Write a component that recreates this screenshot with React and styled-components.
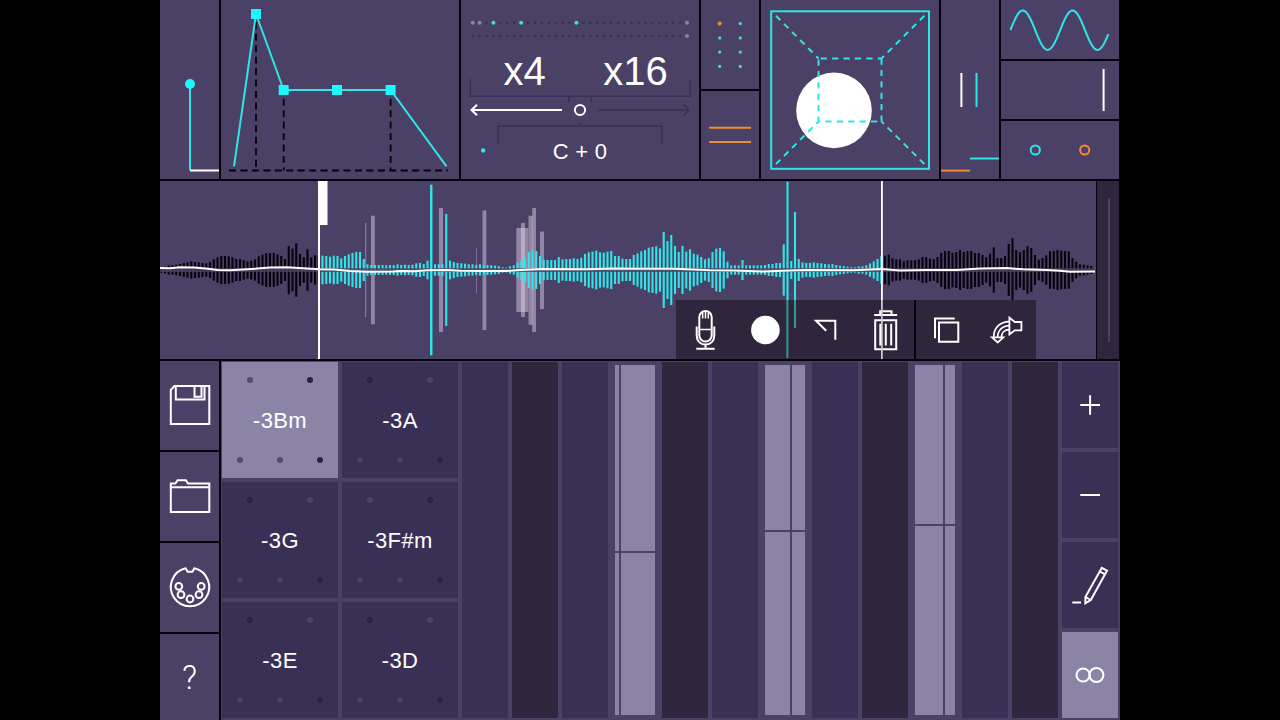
import React from "react";
import styled, { createGlobalStyle } from "styled-components";

const PANEL = "#4b4166";
const KEY = "#3a3055";
const DARK = "#2f263d";
const LIGHT = "#8c84a6";
const CYAN = "#30e4e8";
const BRIGHT = "#1cf8fa";
const ORANGE = "#f08c30";
const LINE = "#3a3057";
const INK = "#04020c";

const GlobalStyle = createGlobalStyle`
  body {
    margin: 0;
    background: #000;
    font-family: "Liberation Sans", Arial, sans-serif;
    color: white;
    overflow: hidden;
  }
`;

const Stage = styled.div`
  width: 960px;
  height: 720px;
  margin: 0 auto;
  display: grid;
  grid-template-rows: 179px 178px 359px;
  gap: 2px;
  background: ${INK};
`;

const TopRow = styled.div`
  display: grid;
  grid-template-columns: 59px 238px 238px 58px 178px 58px 118px;
  gap: 2px;
`;

const Panel = styled.div`
  position: relative;
  background: ${PANEL};
`;

const Stack = styled.div`
  display: grid;
  grid-template-rows: ${(props) => props.rows};
  gap: 2px;
`;

const Drawing = styled.svg`
  display: block;
  fill: none;
  stroke: white;
  stroke-width: 2;
`;

const BackDrawing = styled(Drawing)`
  position: absolute;
  top: 0;
  left: 0;
`;

const Factors = styled.div`
  position: relative;
  display: grid;
  grid-template-columns: 111px 111px;
  padding: 49px 0 0 8px;
  font-size: 40px;
  line-height: 44px;
  text-align: center;
`;

const Note = styled.div`
  position: relative;
  margin-top: 46px;
  font-size: 22px;
  line-height: 26px;
  letter-spacing: 0.3px;
  text-align: center;
`;

const WaveRow = styled.div`
  display: grid;
  grid-template-columns: 936px 22px;
  gap: 1px;
`;

const Wave = styled(Panel)`
  overflow: hidden;
`;

const Strip = styled.div`
  background: ${DARK};
  padding: 17px 0 17px 11px;
`;

const StripLine = styled.div`
  width: 2px;
  height: 144px;
  background: ${PANEL};
`;

const Toolbar = styled.div`
  position: absolute;
  left: 516px;
  bottom: 0;
  display: flex;
  background: ${DARK};
`;

const Tool = styled.div`
  width: 60px;
  height: 59px;
  box-sizing: border-box;
  border-right: ${(props) => (props.$divider ? `2px solid ${INK}` : "none")};
`;

const BottomRow = styled.div`
  display: grid;
  grid-template-columns: 59px 899px;
  gap: 2px;
`;

const Help = styled(Panel)`
  font-family: Roboto, "Open Sans", sans-serif;
  font-weight: 300;
  font-size: 33px;
  line-height: 87px;
  text-align: center;
`;

const Play = styled.div`
  display: flex;
  padding: 1px 0 0 1px;
  background: ${PANEL};
`;

const Pads = styled.div`
  display: grid;
  grid-template-columns: 116px 116px;
  grid-auto-rows: 116px;
  gap: 4px;
`;

const Pad = styled.div`
  position: relative;
  background: ${(props) => (props.$on ? LIGHT : KEY)};
  font-size: 22px;
  line-height: 118px;
  letter-spacing: 0.4px;
  text-align: center;
`;

const Keys = styled.div`
  display: flex;
  gap: 4px;
  margin: 0 4px;
`;

const Key = styled.div`
  width: 46px;
  height: 356px;
  background: ${(props) => (props.$dark ? DARK : KEY)};
`;

const LitKey = styled.div`
  display: grid;
  width: 40px;
  height: 350px;
  margin: 3px;
  grid-template-columns: ${(props) => props.$x}px 1fr;
  grid-template-rows: ${(props) => props.$y}px 1fr;
  column-gap: ${(props) => props.$gapX}px;
  row-gap: ${(props) => props.$gapY}px;
`;

const LitPart = styled.div`
  background: ${LIGHT};
`;

const Actions = styled.div`
  display: grid;
  grid-template-columns: 56px;
  grid-auto-rows: 86px;
  gap: 4px;
`;

const Action = styled.div`
  background: ${(props) => (props.$on ? LIGHT : KEY)};
`;

// half height of every bar, in thirds of a pixel
const bars = [
  8, 10, 14, 14, 16, 18, 21, 23, 26, 24, 23, 21, 20, 24, 32, 38, 42, 42, 41, 38,
  33, 33, 29, 26, 28, 32, 41, 46, 51, 51, 51, 47, 42, 33, 72, 64, 80, 48, 38,
  62, 38, 44, 44, 43, 42, 40, 43, 42, 35, 42, 47, 51, 54, 54, 33, 17, 15, 15,
  15, 15, 14, 15, 15, 17, 15, 16, 15, 16, 20, 21, 18, 28, 256, 17, 17, 17, 168,
  28, 24, 21, 20, 19, 17, 17, 15, 17, 14, 15, 14, 13, 12, 8, 7, 11, 14, 22, 28,
  37, 54, 60, 57, 42, 31, 30, 30, 30, 39, 32, 33, 33, 35, 33, 37, 48, 53, 55,
  58, 53, 52, 55, 57, 42, 42, 34, 33, 33, 45, 50, 56, 60, 67, 69, 71, 65, 114,
  87, 105, 72, 54, 72, 55, 62, 49, 46, 39, 32, 36, 54, 64, 66, 56, 25, 14, 14,
  14, 30, 14, 14, 14, 14, 14, 15, 18, 18, 21, 21, 77, 265, 27, 174, 33, 23, 21,
  21, 23, 21, 20, 18, 17, 18, 15, 13, 12, 10, 8, 8, 11, 11, 14, 20, 26, 33, 41,
  43, 46, 35, 32, 32, 26, 29, 29, 29, 32, 39, 39, 34, 32, 39, 51, 57, 57, 52,
  54, 60, 54, 57, 57, 51, 51, 45, 38, 49, 68, 36, 36, 42, 78, 95, 60, 53, 60,
  71, 66, 45, 31, 36, 44, 56, 57, 60, 58, 57, 56, 36, 25, 17, 16, 14, 12,
];

// x, top, width, height
const grains = [
  [205.2, 42, 1, 94],
  [211, 34.7, 3.8, 108.7],
  [279, 27, 4, 124],
  [316.2, 67, 0.7, 45.5],
  [322.5, 29.5, 3.8, 119.5],
  [356.3, 47, 12, 84],
  [361, 42, 4, 94],
  [368.5, 34.7, 4.3, 109],
  [372.2, 27, 3.8, 124],
  [380, 50.5, 4, 77.5],
];

const level = [
  [0, 87], [10, 87.3], [20, 86.3], [34, 86.4], [46, 87.6], [58, 89], [70, 89.3],
  [87, 88.3], [110, 86.6], [127, 86.3], [147, 87.6], [160, 88.2], [174, 88.4],
  [190, 90], [207, 90.7], [233, 90.6], [240, 89.9], [254, 90.2], [268, 89.3],
  [287, 89], [300, 89.7], [323, 90], [347, 90], [360, 89], [383, 88],
  [427, 88.2], [453, 87.4], [480, 87.7], [513, 87.7], [540, 88.7], [550, 89.3],
  [573, 89.4], [603, 90.6], [623, 89.7], [647, 89], [693, 89.3], [722, 88.1],
  [740, 89.6], [767, 89], [797, 89], [820, 87.4], [847, 87], [863, 88.3],
  [887, 89], [900, 89.8], [910, 90.7], [935, 90.4],
];

const pads = [
  { name: "-3Bm", on: true, top: [0, 1] },
  { name: "-3A", top: [1, 0] },
  { name: "-3G", top: [1, 0] },
  { name: "-3F#m", top: [0, 1] },
  { name: "-3E", top: [1, 0] },
  { name: "-3D", top: [1, 0] },
];

const keys = [
  {},
  { dark: true },
  {},
  { lit: true, x: 4, y: 186, gapX: 1.5, gapY: 1.5 },
  { dark: true },
  {},
  { lit: true, x: 25, y: 165, gapX: 1.5, gapY: 1.5 },
  {},
  { dark: true },
  { lit: true, x: 28, y: 159, gapX: 1.5, gapY: 2 },
  {},
  { dark: true },
];

// Top panels are drawn in the coordinates of the whole 960px stage
function Art({ x, y = 0, w, h, children }) {
  return (
    <Drawing width={w} height={h} viewBox={`${x} ${y} ${w} ${h}`}>
      {children}
    </Drawing>
  );
}

function Envelope() {
  const points = [
    [96, 14],
    [123.7, 90],
    [177, 90],
    [230.6, 90],
  ];
  return (
    <Art x={61} w={238} h={179}>
      <g stroke={INK} strokeWidth="1.8" strokeDasharray="7 4.45">
        <path d="M96 22.3V170.5" />
        <path d="M123.7 98.7V170.5" />
        <path d="M230.6 98.7V170.5" />
        <path d="M69 170.5H288" />
      </g>
      <path
        stroke={CYAN}
        d="M74 166.3L96 14L123.7 90H230.6L286.5 166.3"
      />
      {points.map(([x, y]) => (
        <rect key={x} x={x - 5} y={y - 5} width="10" height="10" fill={BRIGHT} stroke="none" />
      ))}
    </Art>
  );
}

function Sequence() {
  const dot = (i, row) => {
    let fill = LINE;
    if (row === 0 && [3, 7, 15].includes(i)) fill = CYAN;
    if (i === 31 || (row === 0 && i < 2)) fill = LIGHT;
    return (
      <circle
        key={`${row}-${i}`}
        cx={312.7 + i * 6.915}
        cy={row ? 36 : 22.8}
        r={fill === LINE ? 1.3 : 2}
        fill={fill}
        stroke="none"
      />
    );
  };
  const steps = Array.from({ length: 32 }, (_, i) => i);
  return (
    <Panel>
      <BackDrawing width="238" height="179" viewBox="301 0 238 179">
        {steps.map((i) => dot(i, 0))}
        {steps.map((i) => dot(i, 1))}
        <g stroke={LINE} strokeWidth="1.6">
          <path d="M310.3 79V96.3H530V79M409 97V102M431.4 97V102" />
          <path d="M438 110H529M523.5 104.7L529 110L523.5 115.3" />
          <path d="M338 145V126H502V145M420 122.5V126" />
        </g>
        <path d="M402 110H311.5M317 104.7L311.5 110L317 115.3" />
        <circle cx="420" cy="110" r="5.1" />
        <circle cx="323.2" cy="150.5" r="2.2" fill={CYAN} stroke="none" />
      </BackDrawing>
      <Factors>
        <span>x4</span>
        <span>x16</span>
      </Factors>
      <Note>C + 0</Note>
    </Panel>
  );
}

function Space() {
  return (
    <Art x={601} w={178} h={179}>
      <circle cx="674" cy="110.4" r="37.8" fill="white" stroke="none" />
      <g stroke={CYAN}>
        <rect x="611.2" y="11.3" width="157.8" height="157.5" />
        <g strokeDasharray="6.2 5.2">
          <path d="M658.5 58.5H721.5" strokeDashoffset="9.2" />
          <path d="M658.5 121.5H721.5" strokeDashoffset="4.5" />
          <path d="M658.5 58.5V121.5" strokeDashoffset="-1" />
          <path d="M721.5 58.5V121.5" strokeDashoffset="0" />
          <path d="M616 15.8L658.5 58.5" />
          <path d="M764.3 15.8L721.5 58.5" />
          <path d="M616 164L658.5 121.5" />
          <path d="M764.3 164L721.5 121.5" />
        </g>
      </g>
    </Art>
  );
}

function Oscillator() {
  let d = "";
  for (let x = 850.4; x <= 948.4; x += 1) {
    const y = 30.2 - 19.7 * Math.cos((2 * Math.PI * (x - 862.8)) / 49.8);
    d += `${d ? "L" : "M"}${x.toFixed(1)} ${y.toFixed(2)}`;
  }
  return (
    <Art x={841} w={118} h={59}>
      <path d={d} stroke={CYAN} />
    </Art>
  );
}

function Top() {
  return (
    <TopRow>
      <Panel>
        <Art x={0} w={59} h={179}>
          <path d="M30 84V170" stroke={CYAN} />
          <path d="M30 170.5H59" />
          <circle cx="30" cy="84" r="5" fill={BRIGHT} stroke="none" />
        </Art>
      </Panel>
      <Panel>
        <Envelope />
      </Panel>
      <Sequence />
      <Stack rows="89px 88px">
        <Panel>
          <Art x={541} w={58} h={89}>
            {[23.6, 37.9, 52.1, 66.4].map((y, i) => (
              <g key={y} stroke="none" fill={CYAN}>
                <circle cx="559.7" cy={y} r={i ? 1.6 : 2} fill={i ? CYAN : ORANGE} />
                <circle cx="580.3" cy={y} r="1.6" />
              </g>
            ))}
          </Art>
        </Panel>
        <Panel>
          <Art x={541} y={91} w={58} h={88}>
            <path d="M549.2 127.8H591M549.2 142H591" stroke={ORANGE} />
          </Art>
        </Panel>
      </Stack>
      <Panel>
        <Space />
      </Panel>
      <Panel>
        <Art x={781} w={58} h={179}>
          <path d="M801.4 73V107" />
          <path d="M816.5 73V107M810 158.4H839" stroke={CYAN} />
          <path d="M781 170.6H810" stroke={ORANGE} />
        </Art>
      </Panel>
      <Stack rows="59px 58px 58px">
        <Panel>
          <Oscillator />
        </Panel>
        <Panel>
          <Art x={841} y={61} w={118} h={58}>
            <path d="M943.6 69V111" />
          </Art>
        </Panel>
        <Panel>
          <Art x={841} y={121} w={118} h={58}>
            <circle cx="875.3" cy="150" r="4.6" stroke={CYAN} />
            <circle cx="924.7" cy="150" r="4.6" stroke={ORANGE} />
          </Art>
        </Panel>
      </Stack>
    </TopRow>
  );
}

function ToolIcon({ children }) {
  return (
    <Drawing width="60" height="59" viewBox="0 0 60 59">
      {children}
    </Drawing>
  );
}

function Waveform() {
  return (
    <WaveRow>
      <Wave>
        <Drawing width="936" height="178">
          {grains.map(([x, y, w, h]) => (
            <rect key={x} x={x} y={y} width={w} height={h} fill="#e6d8ee" stroke="none" opacity="0.46" />
          ))}
          {bars.map((h, i) => (
            <rect
              key={i}
              x={i * 3.75 + 0.2}
              y={89 - h / 3}
              width="2.1"
              height={(h * 2) / 3}
              fill={i > 42 && i < 193 ? CYAN : INK}
              stroke="none"
            />
          ))}
          <rect x="0" y="87.2" width="936" height="3.8" fill={PANEL} stroke="none" opacity="0.8" />
          <rect x="270.2" y="4" width="2" height="170" fill={CYAN} stroke="none" />
          <polyline points={level.map((p) => p.join(",")).join(" ")} />
        </Drawing>
        <Toolbar>
          <Tool>
            <ToolIcon>
              <rect x="23.3" y="11" width="12.4" height="30.5" rx="6.2" />
              <path d="M23.3 29.4H35.7M26.7 13V18.5M29.5 11V18.5M32.3 13V18.5" strokeWidth="1.5" />
              <path d="M20.7 26.5V35.5C20.7 41 24.5 44.6 29.5 44.6S38.3 41 38.3 35.5V26.5M29.5 44.6V48.7M20.3 48.8H38.7" />
            </ToolIcon>
          </Tool>
          <Tool>
            <ToolIcon>
              <circle cx="29.4" cy="30" r="14.3" fill="white" stroke="none" />
            </ToolIcon>
          </Tool>
          <Tool>
            <ToolIcon>
              <path d="M39.3 39.8V20.7H20L30.2 30.8" />
            </ToolIcon>
          </Tool>
          <Tool $divider>
            <ToolIcon>
              <path d="M18.2 15H41.2M24.2 15V11.2H35.5V15" />
              <path d="M19.2 20.2H40.2V49.2H19.2Z" />
              <path d="M24.3 23.7V45.5M29.8 23.7V45.5M35.2 23.7V45.5" />
            </ToolIcon>
          </Tool>
          <Tool>
            <ToolIcon>
              <path d="M23 22.6H42.3V41.8H23ZM19 38.2V18.5H38.7" />
            </ToolIcon>
          </Tool>
          <Tool>
            <ToolIcon>
              <path d="M33.4 17.6V34.5L38.8 30.3H45.4V22H38.8Z" strokeWidth="1.8" />
              <path d="M33.4 21.6C24 21.6 17.7 28 17.7 37.2M33.4 25.6C26.5 25.6 21.6 30.5 21.6 37.2M33.4 29.6C28.5 29.6 25.4 32.8 25.4 37.2" strokeWidth="1.7" />
              <path d="M16 37.4H27.4L21.7 42.5Z" strokeWidth="1.7" />
            </ToolIcon>
          </Tool>
        </Toolbar>
        <BackDrawing width="936" height="178">
          <g stroke="#2c9c90" strokeWidth="2">
            <path d="M627.4 119V177M635 119V147" />
          </g>
          <path d="M159 0V178" />
          <rect x="158" y="0" width="9.5" height="44" fill="white" stroke="none" />
          <path d="M721.9 0V119" strokeWidth="1.8" />
          <path d="M721.9 119V178" stroke="#c9c6ce" strokeWidth="1.8" />
        </BackDrawing>
      </Wave>
      <Strip>
        <StripLine />
      </Strip>
    </WaveRow>
  );
}

function Side() {
  return (
    <Stack rows="89px 89px 89px 86px">
      <Panel>
        <Art x={0} y={1} w={59} h={89}>
          <path d="M10.8 30L14.4 26H49.3V64H10.8Z" />
          <path d="M15.8 26V39.4H44.5V26M34.5 26H41.5V36.8H34.5Z" />
        </Art>
      </Panel>
      <Panel>
        <Art x={0} y={92} w={59} h={89}>
          <path d="M10.8 152V123.6H15.4L17.6 120.2H25.8L28 123.6H49.3V152ZM10.8 127.3H49.3" />
        </Art>
      </Panel>
      <Panel>
        <Art x={0} y={183} w={59} h={89}>
          <path d="M25.6 208.3A19.2 19.2 0 1 0 34.4 208.3L32.4 211.8H27.6Z" />
          {[[18.8, 226.4], [41.2, 226.4], [21, 234.7], [39, 234.7], [30, 239]].map(([x, y]) => (
            <circle key={x} cx={x} cy={y} r="3.4" />
          ))}
        </Art>
      </Panel>
      <Help>?</Help>
    </Stack>
  );
}

function PadDots({ on, top }) {
  const shade = on ? ["#544a72", "#2a2145"] : [PANEL, "#2c2341"];
  const dots = [
    [28, 18, top[0]],
    [88, 18, top[1]],
    [18, 98, 0],
    [58, 98, 0],
    [98, 98, 1],
  ];
  return (
    <BackDrawing width="116" height="116">
      {dots.map(([x, y, tone]) => (
        <circle key={`${x}-${y}`} cx={x} cy={y} r="3" fill={shade[tone]} stroke="none" />
      ))}
    </BackDrawing>
  );
}

function Bottom() {
  return (
    <BottomRow>
      <Side />
      <Play>
        <Pads>
          {pads.map((pad) => (
            <Pad key={pad.name} $on={pad.on}>
              <PadDots on={pad.on} top={pad.top} />
              {pad.name}
            </Pad>
          ))}
        </Pads>
        <Keys>
          {keys.map((key, i) =>
            key.lit ? (
              <LitKey key={i} $x={key.x} $y={key.y} $gapX={key.gapX} $gapY={key.gapY}>
                <LitPart />
                <LitPart />
                <LitPart />
                <LitPart />
              </LitKey>
            ) : (
              <Key key={i} $dark={key.dark} />
            )
          )}
        </Keys>
        <Actions>
          <Action>
            <Art x={0} w={56} h={86}>
              <path d="M18.3 43H38M28.1 33.3V52.7" />
            </Art>
          </Action>
          <Action>
            <Art x={0} w={56} h={86}>
              <path d="M18.3 43H38" />
            </Art>
          </Action>
          <Action>
            <Art x={0} w={56} h={86}>
              <path d="M10.3 60.5H19" />
              <path d="M23.4 55L39.8 25.8L45 28.7L28.8 58L23.4 61.2ZM37.7 29.4L43 32.4M23.4 55L28.8 58" />
            </Art>
          </Action>
          <Action $on>
            <Art x={0} w={56} h={86}>
              <circle cx="21.1" cy="43" r="6.6" />
              <circle cx="34.4" cy="43" r="7" />
            </Art>
          </Action>
        </Actions>
      </Play>
    </BottomRow>
  );
}

function App() {
  return (
    <>
      <GlobalStyle />
      <Stage>
        <Top />
        <Waveform />
        <Bottom />
      </Stage>
    </>
  );
}

export default App;
